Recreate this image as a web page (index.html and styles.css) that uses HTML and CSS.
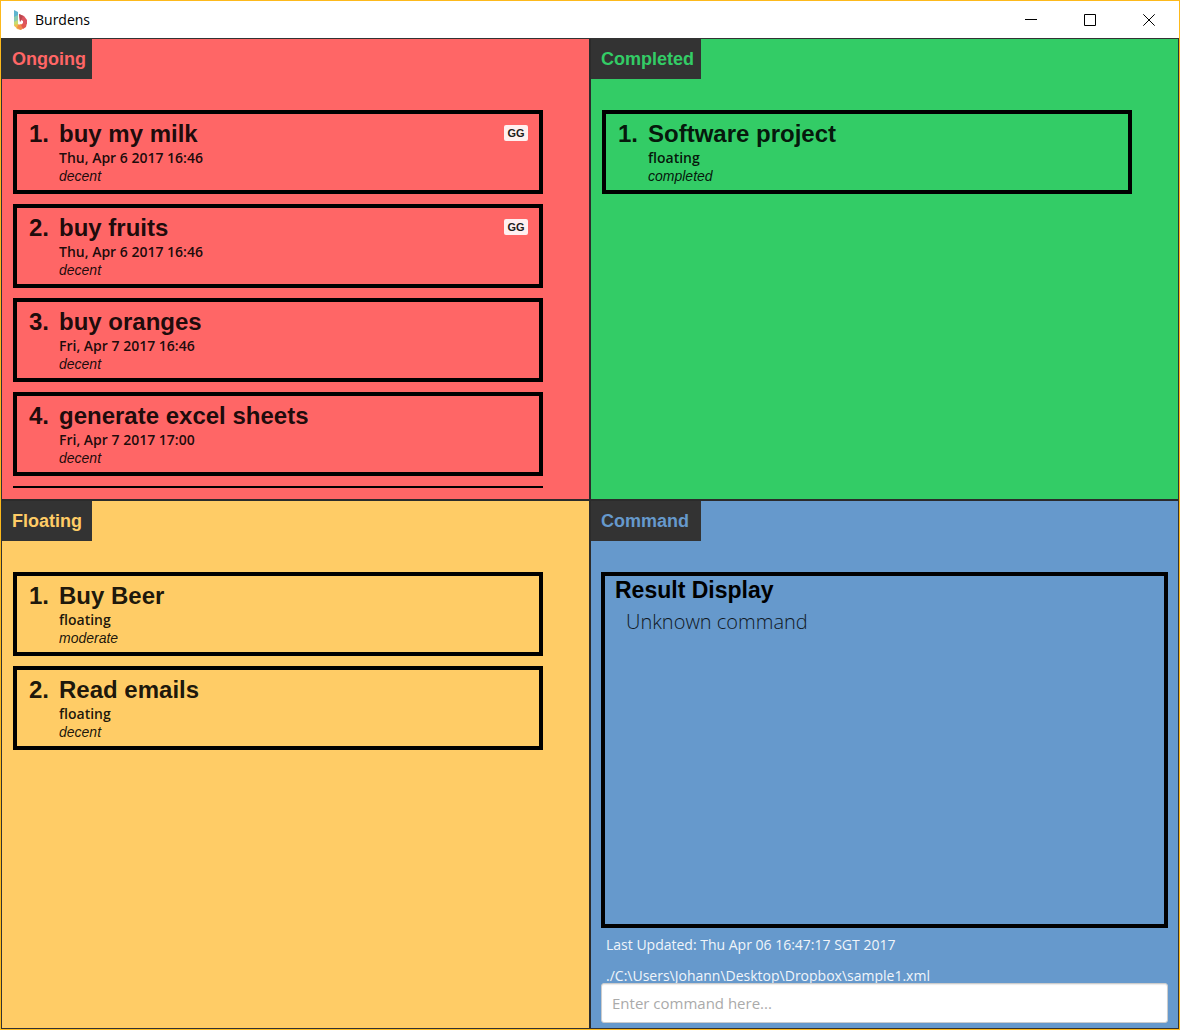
FILE: index.html
```html
<!DOCTYPE html>
<html lang="en">
<head>
<meta charset="utf-8">
<meta name="viewport" content="width=device-width, initial-scale=1">
<title>Burdens</title>
<link rel="stylesheet" href="styles.css">
</head>
<body>
<div class="window">
  <header class="titlebar">
    <svg class="logo" viewBox="0 0 14 20" aria-hidden="true">
      <path d="M1 0l4 2v6L1 9z" fill="#5fb4cf"/>
      <path d="M1 7l4-2v6l-4 2z" fill="#8ccbb0"/>
      <path d="M1 12l4-2v5l-3 2-1-2z" fill="#c5dd72"/>
      <path d="M1 15l4-1 3 2v4l-4-1z" fill="#f3bd4c"/>
      <path d="M5 15l3-1 4 3-4 3-4-2z" fill="#f08a4b"/>
      <path d="M8 15l2-2h4l-1 4-3 2z" fill="#e2574f"/>
      <path d="M6 4l5 2 3 4v4h-4v-3L8 10l-1 2z" fill="#dc5560"/>
      <path d="M6 4l4 2-2 4-1 2z" fill="#b9474e"/>
    </svg>
    <h1 class="app-name">Burdens</h1>
    <div class="controls">
      <button class="control" type="button" aria-label="Minimize"><svg viewBox="0 0 12 12"><path d="M0 5.5h12"/></svg></button>
      <button class="control" type="button" aria-label="Maximize"><svg viewBox="0 0 12 12"><path d="M.5.5h11v11H.5z"/></svg></button>
      <button class="control" type="button" aria-label="Close"><svg viewBox="0 0 12 12"><path d="M.3.3l11.4 11.4M11.7.3L.3 11.7"/></svg></button>
    </div>
  </header>
  <main class="board">
    <section class="panel ongoing">
      <h2 class="tab">Ongoing</h2>
      <ol class="tasks">
        <li class="task"><span class="number">1.</span><div class="details"><h3 class="name">buy my milk</h3><p class="date">Thu, Apr 6 2017 16:46</p><p class="priority">decent</p></div><span class="tag">GG</span></li>
        <li class="task"><span class="number">2.</span><div class="details"><h3 class="name">buy fruits</h3><p class="date">Thu, Apr 6 2017 16:46</p><p class="priority">decent</p></div><span class="tag">GG</span></li>
        <li class="task"><span class="number">3.</span><div class="details"><h3 class="name">buy oranges</h3><p class="date">Fri, Apr 7 2017 16:46</p><p class="priority">decent</p></div></li>
        <li class="task"><span class="number">4.</span><div class="details"><h3 class="name">generate excel sheets</h3><p class="date">Fri, Apr 7 2017 17:00</p><p class="priority">decent</p></div></li>
        <li class="task"></li>
      </ol>
    </section>
    <section class="panel completed">
      <h2 class="tab wide">Completed</h2>
      <ol class="tasks">
        <li class="task"><span class="number">1.</span><div class="details"><h3 class="name">Software project</h3><p class="date">floating</p><p class="priority">completed</p></div></li>
      </ol>
    </section>
    <section class="panel floating">
      <h2 class="tab">Floating</h2>
      <ol class="tasks">
        <li class="task"><span class="number">1.</span><div class="details"><h3 class="name">Buy Beer</h3><p class="date">floating</p><p class="priority">moderate</p></div></li>
        <li class="task"><span class="number">2.</span><div class="details"><h3 class="name">Read emails</h3><p class="date">floating</p><p class="priority">decent</p></div></li>
      </ol>
    </section>
    <section class="panel command">
      <h2 class="tab wide">Command</h2>
      <div class="console">
        <div class="result">
          <h3 class="result-title">Result Display</h3>
          <p class="message">Unknown command</p>
        </div>
        <div class="status">
          <p>Last Updated: Thu Apr 06 16:47:17 SGT 2017</p>
          <p>./C:\Users\Johann\Desktop\Dropbox\sample1.xml</p>
        </div>
        <input class="entry" type="text" aria-label="Command" placeholder="Enter command here...">
      </div>
    </section>
  </main>
</div>
</body>
</html>
```
FILE: styles.css
```css
* {
  box-sizing: border-box;
  margin: 0;
  padding: 0;
}

body {
  font-family: "Open Sans", "Noto Sans", sans-serif;
  color: #000;
}

.window {
  display: flex;
  flex-direction: column;
  height: 100vh;
  border: 1px solid #fdb91b;
  background: #fff;
}

.titlebar {
  display: flex;
  align-items: center;
  height: 37px;
  padding: 0 1px 0 12px;
}

.logo {
  width: 14px;
  height: 20px;
}

.app-name {
  margin-left: 8px;
  font-size: 14px;
  font-weight: 400;
}

.controls {
  display: flex;
  align-self: stretch;
  margin-left: auto;
}

.control {
  display: flex;
  align-items: center;
  justify-content: center;
  width: 59px;
  border: 0;
  background: none;
}

.control svg {
  width: 12px;
  height: 12px;
  fill: none;
  stroke: #000;
}

.board {
  flex: 1;
  display: grid;
  grid-template-columns: 1fr 1fr;
  grid-template-rows: minmax(0, 460fr) minmax(0, 527fr);
  gap: 2px;
  min-height: 0;
  border: 1px solid #333;
  background: #2b2b2b;
}

.panel {
  display: flex;
  flex-direction: column;
  align-items: flex-start;
  background: var(--tone);
}

.ongoing { --tone: #f66; }
.completed { --tone: #3c6; }
.floating { --tone: #fc6; }
.command { --tone: #69c; }

.tab {
  width: 90px;
  padding-left: 10px;
  background: #333;
  color: var(--tone);
  font: bold 18px/40px "Liberation Sans", Arial, sans-serif;
}

.wide {
  width: 110px;
}

.tasks {
  align-self: stretch;
  flex: 1;
  min-height: 0;
  margin: 31px 46px 11px 11px;
  overflow: hidden;
  list-style: none;
}

.task {
  display: flex;
  height: 84px;
  margin-bottom: 10px;
  padding: 8px 11px 0 12px;
  border: 4px solid #000;
  color: rgba(0, 0, 0, 0.9);
}

.number,
.name {
  font: bold 24px/24px "Liberation Sans", Arial, sans-serif;
}

.number {
  width: 30px;
}

.details {
  flex: 1;
}

.date {
  font-size: 14px;
  font-weight: 600;
  line-height: 24px;
}

.priority {
  font: italic 14px/12px "Liberation Sans", Arial, sans-serif;
}

.tag {
  align-self: flex-start;
  width: 24px;
  margin-top: 3px;
  border-radius: 2px;
  background: rgba(255, 255, 255, 0.9);
  font: bold 11px/16px "Liberation Sans", Arial, sans-serif;
  text-align: center;
}

.console {
  align-self: stretch;
  flex: 1;
  display: flex;
  flex-direction: column;
  min-height: 0;
  padding: 31px 10px 5px;
}

.result {
  flex: 1;
  padding: 2px 10px;
  border: 4px solid #000;
}

.result-title {
  font: bold 23px/24px "Liberation Sans", Arial, sans-serif;
}

.message {
  padding-left: 11px;
  color: #10181f;
  font-size: 20px;
  font-weight: 300;
  line-height: 40px;
}

.status {
  padding: 1px 5px;
  color: #f0f5fa;
  font-size: 14px;
  line-height: 31px;
}

.entry {
  height: 40px;
  margin-top: -9px;
  padding: 0 10px;
  border: 1px solid #ccc;
  border-radius: 3px;
  background: #fff;
  box-shadow: inset 0 1px 1px rgba(0, 0, 0, 0.08);
  font: 15px "Open Sans", "Noto Sans", sans-serif;
}

.entry::placeholder {
  color: #aaa;
  opacity: 1;
}
```
